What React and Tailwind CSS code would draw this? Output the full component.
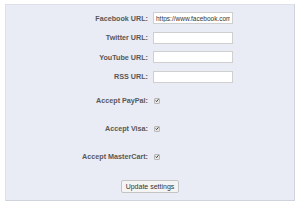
import React from "react";

function Check() {
  return (
    <span className="inline-flex h-[6px] w-[6px] items-center justify-center rounded-[1px] border border-[#b8b8b8] bg-[#e6e6e6]">
      <svg width="5" height="5" viewBox="0 0 5 5">
        <path d="M0.8 2.6 L2 3.8 L4.3 1" stroke="#333" strokeWidth="1.2" fill="none" />
      </svg>
    </span>
  );
}

const textRows = [
  { label: "Facebook URL:", value: "https://www.facebook.com/" },
  { label: "Twitter URL:", value: "" },
  { label: "YouTube URL:", value: "" },
  { label: "RSS URL:", value: "" },
];

const checkRows = ["Accept PayPal:", "Accept Visa:", "Accept MasterCart:"];

export default function App() {
  return (
    <div className="h-[206px] w-[300px] bg-white pl-[5px] pt-[4px]" style={{ fontFamily: '"Liberation Sans", Arial, sans-serif' }}>
      <div className="h-[197px] w-[290px] border border-[#dde1ea] border-b-[#cfd3db] border-r-[#cfd3db] bg-[#e9ecf4] pt-[3.5px]">
        {textRows.map((r) => (
          <div key={r.label} className="grid h-[19.5px] grid-cols-[142px_1fr] items-center gap-x-[5px]">
            <span className="text-right text-[7.2px] font-bold leading-none text-[#585858]">{r.label}</span>
            <input
              readOnly
              value={r.value}
              className="h-[12px] w-[80px] border border-[#cfcfcf] bg-white px-[2px] text-[6.5px] leading-none text-[#333] outline-none"
            />
          </div>
        ))}
        {checkRows.map((l) => (
          <div key={l} className="grid h-[28px] grid-cols-[142px_1fr] items-center gap-x-[5px]">
            <span className="text-right text-[7.2px] font-bold leading-none text-[#585858]">{l}</span>
            <div className="flex pl-[1px]">
              <Check />
            </div>
          </div>
        ))}
        <div className="mt-[9.5px] flex justify-center">
          <button className="h-[13px] rounded-[2px] border border-[#c4c4c4] bg-[#f4f4f4] px-[4px] text-[7px] leading-none text-[#333]">
            Update settings
          </button>
        </div>
      </div>
    </div>
  );
}
